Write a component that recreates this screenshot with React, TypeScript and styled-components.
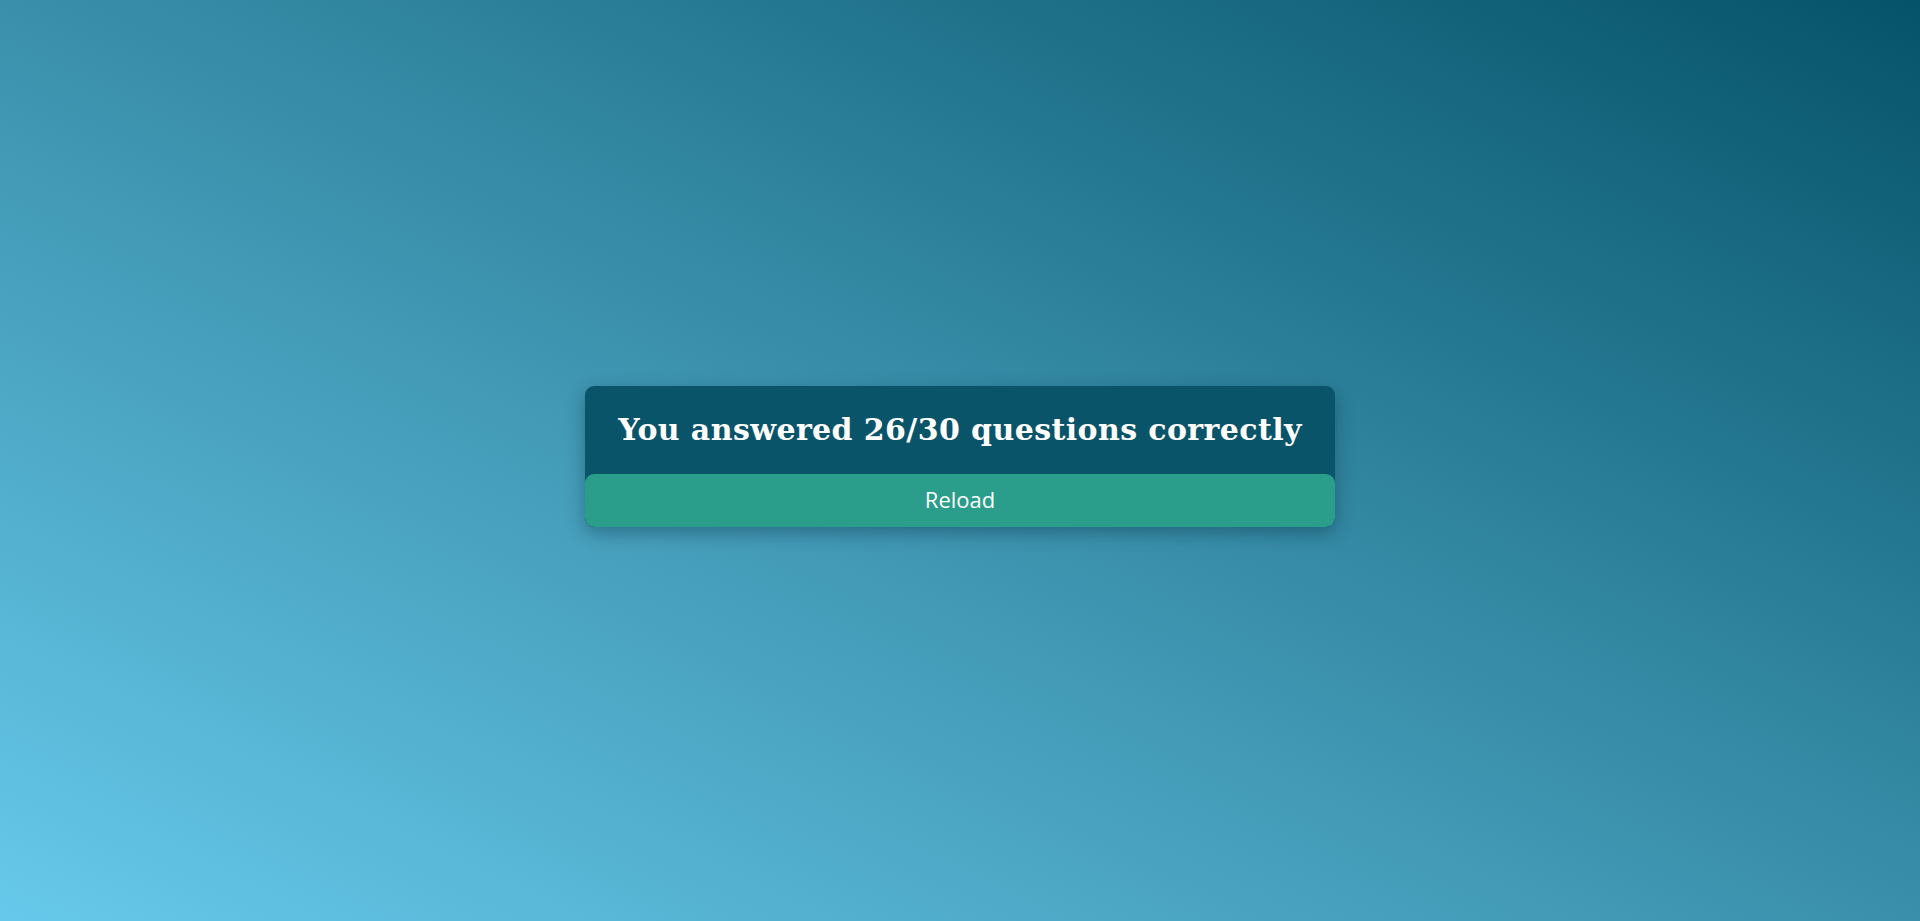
import React from "react";
import styled, { createGlobalStyle } from "styled-components";

const Global = createGlobalStyle`
  html, body { margin: 0; padding: 0; height: 100%; overflow: hidden; }
  #root { height: 100%; }
`;

const Page = styled.div`
  height: 921px;
  box-sizing: border-box;
  padding-bottom: 9px;
  display: flex;
  align-items: center;
  justify-content: center;
  background: linear-gradient(to top right, #67c9eb 0%, #3a90ab 50%, #05536a 100%);
`;

const Card = styled.div`
  width: 750px;
  border-radius: 9px;
  background: #0a546a;
  box-shadow: 0 6px 18px rgba(0, 30, 50, 0.35);
  display: flex;
  flex-direction: column;
  overflow: hidden;
`;

const Title = styled.h2`
  margin: 0;
  height: 88px;
  display: flex;
  align-items: center;
  justify-content: center;
  color: #ffffff;
  font-family: "DejaVu Serif", "Liberation Serif", serif;
  font-weight: bold;
  font-size: 30px;
  letter-spacing: 0.4px;
`;

const ReloadButton = styled.button`
  height: 53px;
  border: none;
  border-radius: 9px;
  background: #2a9d8b;
  color: #ffffff;
  font-family: "Open Sans", "Noto Sans", sans-serif;
  font-size: 22px;
  padding: 0 0 2px;
  cursor: pointer;
`;

export default function App() {
  return (
    <>
      <Global />
      <Page>
        <Card>
          <Title>You answered 26/30 questions correctly</Title>
          <ReloadButton>Reload</ReloadButton>
        </Card>
      </Page>
    </>
  );
}
